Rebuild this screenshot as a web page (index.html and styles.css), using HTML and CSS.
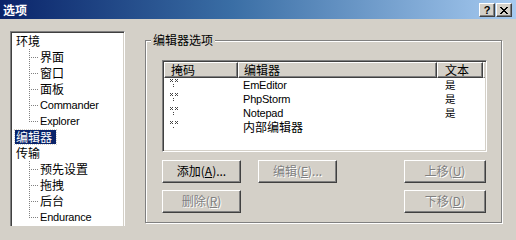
FILE: index.html
```html
<!DOCTYPE html>
<html lang="zh-CN">
<head>
<meta charset="utf-8">
<title>选项</title>
<link rel="stylesheet" href="styles.css">
</head>
<body>
<div class="window">
  <div class="titlebar">
    <span class="title">选项</span>
    <div class="caps">
      <span class="cap cap-help">?</span>
      <span class="cap cap-close"><svg width="8" height="7" viewBox="0 0 8 7"><path d="M0 0h2v1h1v1h2v-1h1v-1h2v1h-1v1h-1v1h-1v1h1v1h1v1h1v1h-2v-1h-1v-1h-2v1h-1v1h-2v-1h1v-1h1v-1h1v-1h-1v-1h-1v-1h-1z" fill="#000"/></svg></span>
    </div>
  </div>
  <div class="content">
    <div class="tree">
      <ul class="root">
        <li class="node">环境
          <ul class="kids">
            <li class="kid">界面</li>
            <li class="kid">窗口</li>
            <li class="kid">面板</li>
            <li class="kid lat">Commander</li>
            <li class="kid lat last">Explorer</li>
          </ul>
        </li>
        <li class="node"><span class="sel">编辑器</span></li>
        <li class="node">传输
          <ul class="kids">
            <li class="kid">预先设置</li>
            <li class="kid">拖拽</li>
            <li class="kid">后台</li>
            <li class="kid lat last">Endurance</li>
          </ul>
        </li>
      </ul>
    </div>
    <div class="group">
      <span class="legend">编辑器选项</span>
      <div class="list">
        <div class="hdr">
          <div class="hc c1">掩码</div>
          <div class="hc c2">编辑器</div>
          <div class="hc c3">文本</div>
          <div class="hfill"></div>
        </div>
        <div class="row"><div class="c1 mask"><svg class="mk" width="9" height="9" viewBox="0 0 9 9"><path d="M0 0h1v1h-1zM2 0h1v1h-1zM1 1h1v1h-1zM0 2h1v1h-1zM2 2h1v1h-1zM5 0h1v1h-1zM7 0h1v1h-1zM6 1h1v1h-1zM5 2h1v1h-1zM7 2h1v1h-1zM3 5h1v1h-1zM3 7h1v1h-1z" fill="#444"/></svg></div><div class="c2 lat">EmEditor</div><div class="c3 yes">是</div></div>
        <div class="row"><div class="c1 mask"><svg class="mk" width="9" height="9" viewBox="0 0 9 9"><path d="M0 0h1v1h-1zM2 0h1v1h-1zM1 1h1v1h-1zM0 2h1v1h-1zM2 2h1v1h-1zM5 0h1v1h-1zM7 0h1v1h-1zM6 1h1v1h-1zM5 2h1v1h-1zM7 2h1v1h-1zM3 5h1v1h-1zM3 7h1v1h-1z" fill="#444"/></svg></div><div class="c2 lat">PhpStorm</div><div class="c3 yes">是</div></div>
        <div class="row"><div class="c1 mask"><svg class="mk" width="9" height="9" viewBox="0 0 9 9"><path d="M0 0h1v1h-1zM2 0h1v1h-1zM1 1h1v1h-1zM0 2h1v1h-1zM2 2h1v1h-1zM5 0h1v1h-1zM7 0h1v1h-1zM6 1h1v1h-1zM5 2h1v1h-1zM7 2h1v1h-1zM3 5h1v1h-1zM3 7h1v1h-1z" fill="#444"/></svg></div><div class="c2 lat">Notepad</div><div class="c3 yes">是</div></div>
        <div class="row"><div class="c1 mask"><svg class="mk" width="9" height="9" viewBox="0 0 9 9"><path d="M0 0h1v1h-1zM2 0h1v1h-1zM1 1h1v1h-1zM0 2h1v1h-1zM2 2h1v1h-1zM5 0h1v1h-1zM7 0h1v1h-1zM6 1h1v1h-1zM5 2h1v1h-1zM7 2h1v1h-1zM3 6h1v1h-1z" fill="#444"/></svg></div><div class="c2">内部编辑器</div><div class="c3"></div></div>
      </div>
      <div class="buttons">
        <span class="btn">添加(<u>A</u>)...</span>
        <span class="btn dis">编辑(<u>E</u>)...</span>
        <span class="spacer"></span>
        <span class="btn dis">上移(<u>U</u>)</span>
        <span class="btn dis">删除(<u>R</u>)</span>
        <span class="spacer"></span>
        <span class="spacer"></span>
        <span class="btn dis">下移(<u>D</u>)</span>
      </div>
    </div>
  </div>
</div>
</body>
</html>
```

FILE: styles.css
```css
* { box-sizing: border-box; }
html, body {
  margin: 0;
  padding: 0;
  width: 516px;
  height: 226px;
  overflow: hidden;
  background: #D4D0C8;
}
body {
  font-family: "Liberation Sans", "Noto Sans CJK SC", sans-serif;
  font-size: 12px;
  color: #000;
}
.window {
  width: 516px;
  height: 226px;
  overflow: hidden;
}
.titlebar {
  height: 19px;
  display: flex;
  align-items: center;
  justify-content: space-between;
  background: linear-gradient(to right, #0A246A 0%, #3A6EA5 45%, #A6CAF0 100%);
  padding: 0 4px 0 3px;
}
.title {
  color: #fff;
  font-weight: bold;
  font-size: 12px;
  line-height: 14px;
  font-family: "Noto Sans CJK SC", sans-serif;
}
.caps {
  display: flex;
  gap: 1px;
  align-self: flex-start;
  margin-top: 3px;
}
.cap {
  width: 16px;
  height: 14px;
  background: #D4D0C8;
  border: 1px solid;
  border-color: #fff #404040 #404040 #fff;
  box-shadow: inset -1px -1px 0 #808080;
  display: flex;
  align-items: center;
  justify-content: center;
  font-family: "Liberation Sans", sans-serif;
  font-weight: bold;
  font-size: 11px;
  line-height: 12px;
  color: #000;
}
.content {
  display: flex;
  padding: 12px 0 0 10px;
}
.tree {
  width: 115px;
  height: 210px;
  flex: none;
  background: #fff;
  border: 1px solid;
  border-color: #808080 #fff #fff #808080;
  box-shadow: inset 1px 1px 0 #404040, inset -1px -1px 0 #D4D0C8;
  padding: 1px 1px;
  overflow: hidden;
}
.tree ul {
  list-style: none;
  margin: 0;
  padding: 0;
}
.node {
  line-height: 16px;
  padding-left: 4px;
  font-family: "Noto Sans CJK SC", sans-serif;
}
.kids {
  margin-left: -4px;
}
.kid {
  height: 16px;
  line-height: 16px;
  padding-left: 24px;
  background-image:
    repeating-linear-gradient(to bottom, #808080 0 1px, transparent 1px 2px),
    repeating-linear-gradient(to right, #808080 0 1px, transparent 1px 2px);
  background-size: 1px 16px, 9px 1px;
  background-position: 13px 0, 13px 8px;
  background-repeat: no-repeat;
}
.kid.last {
  background-size: 1px 9px, 9px 1px;
}
.lat {
  font-family: "Liberation Sans", sans-serif;
  font-size: 11px;
  letter-spacing: -0.2px;
}
.sel {
  display: inline-block;
  background: #0A246A;
  color: #fff;
  padding: 0 4px 0 1px;
  margin-left: -1px;
  line-height: 14px;
  outline: 1px dotted #D4D0C8;
  outline-offset: 0;
}
.group {
  position: relative;
  margin: 9px 0 0 20px;
  width: 357px;
  height: 183px;
  border: 1px solid #808080;
  box-shadow: 1px 1px 0 #fff, inset 1px 1px 0 #fff;
  padding: 19px 0 0 16px;
}
.legend {
  position: absolute;
  top: -8px;
  left: 5px;
  padding: 0 2px;
  background: #D4D0C8;
  line-height: 14px;
  font-family: "Noto Sans CJK SC", sans-serif;
}
.list {
  width: 325px;
  height: 92px;
  background: #fff;
  border: 1px solid;
  border-color: #808080 #fff #fff #808080;
  box-shadow: inset 1px 1px 0 #404040, inset -1px -1px 0 #D4D0C8;
  padding: 1px;
  overflow: hidden;
}
.hdr {
  display: flex;
  height: 16px;
}
.hc {
  height: 16px;
  background: #D4D0C8;
  border: 1px solid;
  border-color: #fff #404040 #404040 #fff;
  box-shadow: inset -1px -1px 0 #808080;
  line-height: 13px;
  font-family: "Noto Sans CJK SC", sans-serif;
}
.hfill {
  flex: 1;
  height: 16px;
  background: #D4D0C8;
  border-top: 1px solid #fff;
  border-left: 1px solid #fff;
  border-bottom: 1px solid #808080;
}
.c1 { width: 74px; padding-left: 6px; flex: none; }
.c2 { width: 199px; padding-left: 5px; flex: none; }
.c3 { width: 46px; padding-left: 7px; flex: none; }
.row {
  display: flex;
  height: 14px;
  line-height: 14px;
  font-family: "Noto Sans CJK SC", sans-serif;
}
.row .lat {
  font-family: "Liberation Sans", sans-serif;
}
.yes {
  font-size: 10.5px;
  line-height: 14px;
  padding-left: 8px;
}
.mask {
  display: flex;
  align-items: flex-start;
  padding-left: 6px;
  padding-top: 1px;
}
.buttons {
  width: 325px;
  margin-top: 8px;
  display: grid;
  grid-template-columns: 80px 80px 1fr 83px;
  grid-auto-rows: 23px;
  column-gap: 16px;
  row-gap: 7px;
}
.btn {
  background: #D4D0C8;
  border: 1px solid;
  border-color: #fff #404040 #404040 #fff;
  box-shadow: inset -1px -1px 0 #808080;
  display: flex;
  align-items: center;
  justify-content: center;
  font-family: "Noto Sans CJK SC", sans-serif;
  font-size: 12px;
  line-height: 14px;
  padding-bottom: 1px;
  margin-right: 1px;
}
.btn.dis {
  color: #808080;
  text-shadow: 1px 1px 0 #fff;
}
.btn u {
  text-decoration: underline;
}
```
